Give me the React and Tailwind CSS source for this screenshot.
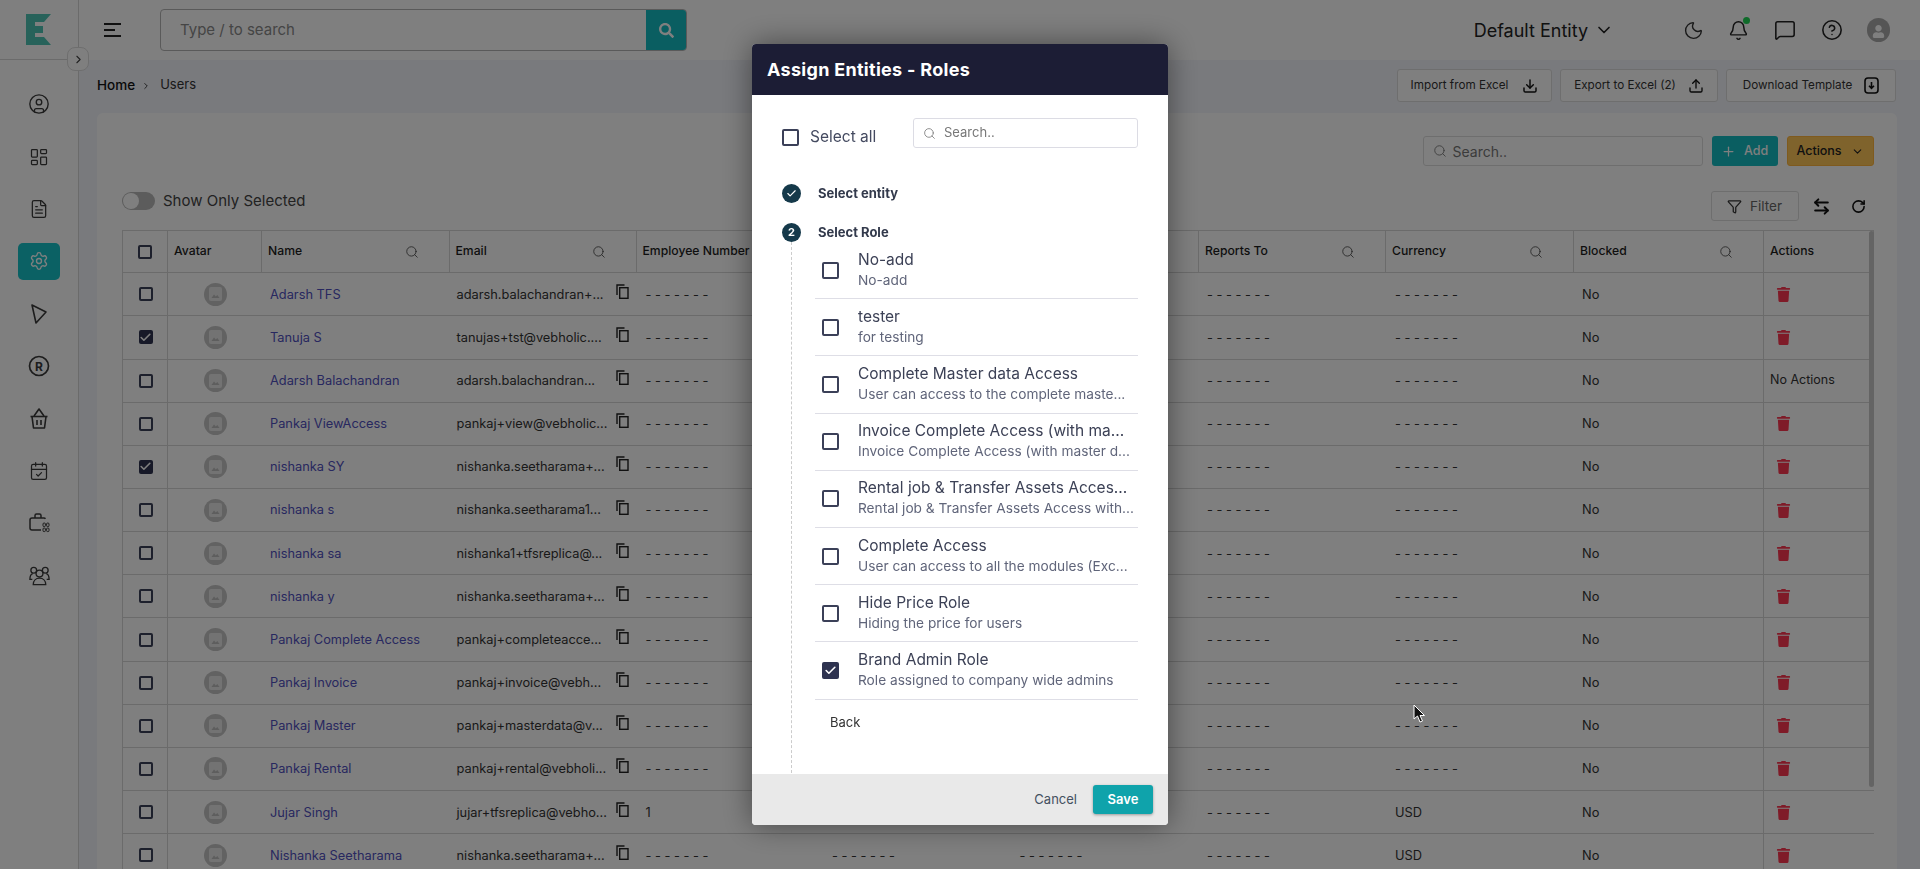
import {
  Bell, CalendarCheck, Check, ChevronDown, ChevronRight, CircleHelp, CircleUser, Download,
  FileText, Filter, LayoutDashboard, MessageSquare, Moon, Plus, RotateCw, Search, Settings,
  Upload, ArrowLeftRight,
} from 'lucide-react';
import { FaSearch, FaTrash, FaUser } from 'react-icons/fa';

const DASH = '- - - - - - -';

const users = [
  { name: 'Adarsh TFS', email: 'adarsh.balachandran+...' },
  { name: 'Tanuja S', email: 'tanujas+tst@vebholic....', checked: true },
  { name: 'Adarsh Balachandran', email: 'adarsh.balachandran...', noActions: true },
  { name: 'Pankaj ViewAccess', email: 'pankaj+view@vebholic...' },
  { name: 'nishanka SY', email: 'nishanka.seetharama+...', checked: true },
  { name: 'nishanka s', email: 'nishanka.seetharama1...' },
  { name: 'nishanka sa', email: 'nishanka1+tfsreplica@...' },
  { name: 'nishanka y', email: 'nishanka.seetharama+...' },
  { name: 'Pankaj Complete Access', email: 'pankaj+completeacce...' },
  { name: 'Pankaj Invoice', email: 'pankaj+invoice@vebh...' },
  { name: 'Pankaj Master', email: 'pankaj+masterdata@v...' },
  { name: 'Pankaj Rental', email: 'pankaj+rental@vebholi...' },
  { name: 'Jujar Singh', email: 'jujar+tfsreplica@vebho...', number: '1', currency: 'USD' },
  { name: 'Nishanka Seetharama', email: 'nishanka.seetharama+...', currency: 'USD' },
];

const roles = [
  { title: 'No-add', desc: 'No-add' },
  { title: 'tester', desc: 'for testing' },
  { title: 'Complete Master data Access', desc: 'User can access to the complete maste...' },
  { title: 'Invoice Complete Access (with ma...', desc: 'Invoice Complete Access (with master d...' },
  { title: 'Rental job & Transfer Assets Acces...', desc: 'Rental job & Transfer Assets Access with...' },
  { title: 'Complete Access', desc: 'User can access to all the modules (Exc...' },
  { title: 'Hide Price Role', desc: 'Hiding the price for users' },
  { title: 'Brand Admin Role', desc: 'Role assigned to company wide admins', checked: true },
];

const COLS = 'grid grid-cols-[45px_94px_187.5px_187px_187.5px_187.5px_187.5px_187px_188px_190px_109.5px]';

const Box = ({ checked, className = '' }) =>
  checked ? (
    <span className={`flex items-center justify-center rounded-[2px] bg-[#2e3350] text-white ${className}`}>
      <Check size={13} strokeWidth={3} />
    </span>
  ) : (
    <span className={`block rounded-[2px] border-2 border-[#3b4058] bg-white ${className}`} />
  );

const TriangleIcon = () => (
  <svg width="20" height="22" viewBox="0 0 20 22" fill="none" stroke="#3a3a3a" strokeWidth="1.6" strokeLinejoin="round">
    <path d="M3 2 L17 9 L7 20 Z" />
  </svg>
);

const RegisteredIcon = () => (
  <svg width="22" height="22" viewBox="0 0 22 22">
    <circle cx="11" cy="11" r="9.5" fill="none" stroke="#3a3a3a" strokeWidth="1.7" />
    <text x="11" y="15.5" textAnchor="middle" fontSize="12" fontWeight="700" fill="#3a3a3a">R</text>
  </svg>
);

const BasketIcon = () => (
  <svg width="22" height="24" viewBox="0 0 22 24" fill="none" stroke="#3a3a3a" strokeWidth="1.6" strokeLinejoin="round">
    <path d="M6 9L11 2L16 9" />
    <path d="M2.5 9.5H19.5" />
    <path d="M4 9.5L5.5 21H16.5L18 9.5" />
    <path d="M9 13V18M13 13V18" />
  </svg>
);

const BriefcaseGrid = () => (
  <svg width="22" height="22" viewBox="0 0 22 22" fill="none" stroke="#3a3a3a" strokeWidth="1.5">
    <path d="M13 18H4a2 2 0 0 1-2-2V8a2 2 0 0 1 2-2h12a2 2 0 0 1 1.5.7" />
    <path d="M7 6V3.5A1.5 1.5 0 0 1 8.5 2h3A1.5 1.5 0 0 1 13 3.5V6" />
    <rect x="15" y="11" width="2.4" height="3.6" rx="1" strokeWidth="1" />
    <rect x="18.6" y="11" width="2.4" height="3.6" rx="1" strokeWidth="1" />
    <rect x="15" y="16" width="2.4" height="3.6" rx="1" strokeWidth="1" />
    <rect x="18.6" y="16" width="2.4" height="3.6" rx="1" strokeWidth="1" />
  </svg>
);

const GroupIcon = () => (
  <svg width="23" height="23" viewBox="0 0 24 24" fill="none" stroke="#3a3a3a" strokeWidth="1.4">
    <circle cx="12" cy="10" r="3.6" />
    <path d="M5.5 21.5c0-4 2.8-6.7 6.5-6.7s6.5 2.7 6.5 6.7z" />
    <circle cx="6" cy="6.5" r="3" />
    <circle cx="18" cy="6.5" r="3" />
    <path d="M4.5 16H2c0-3 1.2-5.5 3-6M19.5 16H22c0-3-1.2-5.5-3-6" />
  </svg>
);

const CopyIcon = () => (
  <svg width="13" height="15" viewBox="0 0 13 15" fill="none" stroke="#222" strokeWidth="1.4" className="mb-[6px] shrink-0">
    <path d="M1 11V1h7.5" />
    <rect x="3.7" y="3.7" width="8.3" height="10.6" />
  </svg>
);

const AvatarIcon = () => (
  <span className="flex h-[23px] w-[23px] items-center justify-center rounded-full bg-[#c4c4c4]">
    <svg width="13" height="14" viewBox="0 0 13 14">
      <rect width="13" height="14" rx="2" fill="#e6e6e6" />
      <path d="M2.5 11 L5 7.5 L6.8 9.5 L8.3 8 L10.5 11Z" fill="#bcbcbc" />
    </svg>
  </span>
);

const TemplateIcon = () => (
  <svg width="15" height="17" viewBox="0 0 15 17" fill="none" stroke="#111" strokeWidth="1.6">
    <rect x="1" y="1" width="13" height="15" rx="3" />
    <path d="M7.5 5v6M5 8.8l2.5 2.5L10 8.8" />
  </svg>
);

const navIcons = [
  <CircleUser key="a" size={22} strokeWidth={1.5} className="text-[#3a3a3a]" />,
  <LayoutDashboard key="b" size={20} strokeWidth={1.5} className="text-[#3a3a3a]" />,
  <FileText key="c" size={20} strokeWidth={1.5} className="text-[#3a3a3a]" />,
  <span key="d" className="flex h-[37px] w-[42px] items-center justify-center rounded-[5px] bg-[#17c2c8] text-white">
    <Settings size={20} strokeWidth={1.6} />
  </span>,
  <TriangleIcon key="e" />,
  <RegisteredIcon key="f" />,
  <BasketIcon key="g" />,
  <CalendarCheck key="h" size={20} strokeWidth={1.5} className="text-[#3a3a3a]" />,
  <BriefcaseGrid key="i" />,
  <GroupIcon key="j" />,
];

const Sidebar = () => (
  <aside className="w-[79px] shrink-0 border-r border-[#d6d6d6] bg-white">
    <div className="flex h-[60px] items-center border-b border-[#d6d6d6] pl-[26px]">
      <svg width="25" height="31" viewBox="0 0 25 31">
        <path d="M0 0H25L18 8H9V12H17V19H9V23H18L25 31H0Z" fill="#4fc4b4" />
      </svg>
    </div>
    <nav className="flex flex-col items-center pt-[18px]">
      {navIcons.map((icon, i) => (
        <div key={i} className="flex h-[52.4px] w-full items-center justify-center">
          {icon}
        </div>
      ))}
    </nav>
  </aside>
);

const TopBar = () => (
  <header className="flex h-[60px] shrink-0 items-center bg-white">
    <svg width="17" height="14" viewBox="0 0 17 14" className="ml-[25px]" stroke="#222" strokeWidth="2">
      <path d="M0 1H17M0 7H11M0 13H17" />
    </svg>
    <div className="ml-[39px] flex h-[42px] w-[527px] overflow-hidden rounded-[4px] border border-[#b5b5b5]">
      <div className="flex flex-1 items-center pl-[19px] text-[15px] text-[#8a8a8a]">Type / to search</div>
      <div className="flex w-[40px] items-center justify-center bg-[#14bcc2] text-white">
        <FaSearch size={15} />
      </div>
    </div>
    <div className="ml-auto flex items-center pr-[30px]">
      <span className="text-[18px] text-[#222]">Default Entity</span>
      <ChevronDown size={20} strokeWidth={2} className="ml-[6px] text-[#222]" />
      <Moon size={21} strokeWidth={1.6} className="ml-[69px] text-[#333]" />
      <span className="relative ml-[24px]">
        <Bell size={21} strokeWidth={1.7} className="text-[#222]" />
        <span className="absolute -top-[3px] right-[-1px] h-[7px] w-[7px] rounded-full bg-[#1fd655]" />
      </span>
      <MessageSquare size={22} strokeWidth={1.7} className="ml-[25px] text-[#222]" />
      <CircleHelp size={22} strokeWidth={1.7} className="ml-[25px] text-[#222]" />
      <span className="ml-[24px] flex h-[24px] w-[23px] items-end justify-center overflow-hidden rounded-full bg-[#aaa] pb-[4px] text-white">
        <FaUser size={13} />
      </span>
    </div>
  </header>
);

const HeadCell = ({ label, search }) => (
  <div className="flex items-center justify-between border-r border-[#d6d6d6] pl-[6px] pr-[30px]">
    <span className="whitespace-nowrap text-[12.2px] font-medium text-[#1d1d1d]">{label}</span>
    {search && <Search size={14} strokeWidth={1.4} className="shrink-0 text-[#444]" />}
  </div>
);

const Table = () => (
  <div className="relative border-l border-t border-[#d6d6d6]">
    <div className={`${COLS} h-[42.2px] border-b border-[#d6d6d6]`}>
      <div className="flex items-center justify-center border-r border-[#d6d6d6] pr-[1px]">
        <Box className="h-[14px] w-[14px]" />
      </div>
      <HeadCell label="Avatar" />
      <HeadCell label="Name" search />
      <HeadCell label="Email" search />
      <HeadCell label="Employee Number" />
      <HeadCell label="" />
      <HeadCell label="" search />
      <HeadCell label="Reports To" search />
      <HeadCell label="Currency" search />
      <HeadCell label="Blocked" search />
      <HeadCell label="Actions" />
    </div>
    {users.map((u, i) => (
      <div key={u.name} className={`${COLS} h-[43.17px] border-b border-[#d6d6d6] text-[12.8px] text-[#333]`}>
        <div className="flex items-center justify-center border-r border-[#d6d6d6] pl-[1px]">
          <Box checked={u.checked} className="h-[14px] w-[14px]" />
        </div>
        <div className="flex items-center justify-center">
          <AvatarIcon />
        </div>
        <div className="flex items-center whitespace-nowrap pl-[8px] text-[#5050c0]">{u.name}</div>
        <div className="flex items-center justify-between whitespace-nowrap pl-[7px] pr-[8px]">
          <span>{u.email}</span>
          <CopyIcon />
        </div>
        <div className="flex items-center pl-[9px]">{u.number || DASH}</div>
        {/* these two columns sit behind the modal except on the last row */}
        <div className="flex items-center pl-[8px]">{i === users.length - 1 ? DASH : ''}</div>
        <div className="flex items-center pl-[8px]">{i === users.length - 1 ? DASH : ''}</div>
        <div className="flex items-center pl-[8px]">{DASH}</div>
        <div className="flex items-center pl-[9px]">{u.currency || DASH}</div>
        <div className="flex items-center border-r border-[#d6d6d6] pl-[8px]">No</div>
        <div className="flex items-center pl-[12px]">
          {u.noActions ? <span className="-ml-[6px] whitespace-nowrap text-[12.5px]">No Actions</span> : <FaTrash size={15} className="text-[#ff3650]" />}
        </div>
      </div>
    ))}
    <div className="absolute right-0 top-0 h-[556px] w-[5px] rounded-full bg-[#c8c8c8]" />
  </div>
);

const Page = () => (
  <div className="flex min-h-0 flex-1 flex-col overflow-hidden bg-[#f2f4fb] pl-[18px] pr-[23px] pt-[9px]">
    <div className="flex h-[33px] shrink-0 items-center">
      <span className="text-[13.5px] font-medium text-[#111]">Home</span>
      <ChevronRight size={10} className="ml-[6px] text-[#222]" />
      <span className="-mt-[2px] ml-[9px] text-[13px] text-[#333]">Users</span>
      <div className="ml-auto flex gap-[8px] pr-[1px]">
        <button className="flex h-[33px] w-[155px] items-center justify-center gap-[14px] rounded-[3px] border border-[#ddd] bg-white text-[11.7px] text-[#333]">
          Import from Excel <Download size={16} strokeWidth={2.2} className="text-[#111]" />
        </button>
        <button className="flex h-[33px] w-[158px] items-center justify-center gap-[12px] rounded-[3px] border border-[#ddd] bg-white text-[11.7px] text-[#333]">
          Export to Excel (2) <Upload size={16} strokeWidth={2} className="text-[#111]" />
        </button>
        <button className="flex h-[33px] w-[170px] items-center justify-center gap-[12px] rounded-[3px] border border-[#ddd] bg-white text-[11.7px] text-[#333]">
          Download Template <TemplateIcon />
        </button>
      </div>
    </div>
    <div className="mt-[11px] flex-1 rounded-t-[6px] bg-white pl-[25px] pr-[23.5px] pt-[23px]">
      <div className="flex h-[30px] justify-end gap-[9px]">
        <div className="flex w-[280px] items-center gap-[6px] rounded-[3px] border border-[#ddd] pl-[9px] text-[14px] text-[#777]">
          <Search size={14} strokeWidth={1.5} /> Search..
        </div>
        <button className="flex w-[66px] items-center justify-center gap-[8px] rounded-[3px] bg-[#14bcc2] text-[12.5px] font-medium text-white">
          <Plus size={15} /> Add
        </button>
        <button className="flex w-[87px] items-center justify-center gap-[9px] rounded-[3px] border border-[#ffb53c] bg-[#ffc658] text-[12.5px] font-medium text-[#222]">
          Actions <ChevronDown size={13} />
        </button>
      </div>
      <div className="mt-[25px] flex h-[30px] items-center">
        <div className="-mt-[10px] flex items-center">
          <span className="relative h-[18px] w-[33px] rounded-full bg-[#b8b8b8]">
            <span className="absolute left-[1px] top-[1px] h-[16px] w-[16px] rounded-full bg-white" />
          </span>
          <span className="ml-[8px] text-[15px] text-[#444]">Show Only Selected</span>
        </div>
        <button className="ml-auto flex h-[30px] w-[88px] items-center justify-center gap-[8px] rounded-[3px] border border-[#ddd] text-[13.5px] text-[#666]">
          <Filter size={15} className="text-[#333]" /> Filter
        </button>
        <ArrowLeftRight size={19} strokeWidth={2.5} className="ml-[13px] text-[#111]" />
        <RotateCw size={15} strokeWidth={2.5} className="ml-[20px] mr-[8px] text-[#111]" />
      </div>
      <div className="mt-[9px]">
        <Table />
      </div>
    </div>
  </div>
);

const Modal = () => (
  <div className="fixed inset-0 flex justify-center bg-black/50">
    <div className="mt-[44px] flex h-[781px] w-[416px] flex-col overflow-hidden rounded-[4px] bg-white shadow-[0_0_30px_rgba(0,0,0,0.45)]">
      <div className="flex h-[51px] shrink-0 items-center bg-[#1c1d35] pl-[15px] text-[18px] font-bold tracking-[0.3px] text-white">
        Assign Entities - Roles
      </div>
      <div className="min-h-0 flex-1 overflow-hidden px-[30px]">
        <div className="flex items-start pt-[23px]">
          <Box className="mt-[11px] h-[17px] w-[17px]" />
          <span className="ml-[11px] mt-[9px] text-[15.5px] leading-[20px] text-[#444a60]">Select all</span>
          <div className="ml-auto flex h-[30px] w-[225px] items-center gap-[8px] rounded-[3px] border border-[#dcdce4] pl-[9px] text-[13px] text-[#777]">
            <Search size={13} strokeWidth={1.5} /> Search..
          </div>
        </div>
        <div className="mt-[36px] flex items-center">
          <span className="flex h-[19px] w-[19px] items-center justify-center rounded-full bg-[#15394a] text-white">
            <Check size={11} strokeWidth={2.5} />
          </span>
          <span className="ml-[17px] text-[13px] font-bold text-[#333a4c]">Select entity</span>
        </div>
        <div className="mt-[19px] flex items-center">
          <span className="flex h-[19px] w-[19px] items-center justify-center rounded-full bg-[#15394a] text-[11px] font-bold text-white">2</span>
          <span className="ml-[17px] text-[13px] font-bold text-[#333a4c]">Select Role</span>
        </div>
        <div className="ml-[9px] flex h-[531px] flex-col border-l border-dashed border-[#ccc] pl-[23px]">
          {roles.map((r) => (
            <div key={r.title} className="flex h-[57.2px] shrink-0 items-center border-b border-[#dedee6] pl-[7px]">
              <Box checked={r.checked} className="h-[17px] w-[17px] shrink-0" />
              <div className="ml-[19px] min-w-0 -mt-[2px]">
                <div className="whitespace-nowrap text-[15.5px] leading-[21px] text-[#3c4156]">{r.title}</div>
                <div className="whitespace-nowrap text-[13.7px] leading-[20px] text-[#60657a]">{r.desc}</div>
              </div>
            </div>
          ))}
          <div className="pl-[15px] pt-[12px] text-[13px] leading-[20px] text-[#333]">Back</div>
        </div>
      </div>
      <div className="flex h-[51px] shrink-0 items-center justify-end gap-[16px] bg-[#e9e9e9] pr-[15px]">
        <span className="text-[13px] text-[#44505f]">Cancel</span>
        <button className="h-[29px] w-[60px] rounded-[3px] bg-[#0fa3ab] text-[13px] font-semibold text-white shadow-[0_1px_3px_rgba(0,0,0,0.35)]">Save</button>
      </div>
    </div>
  </div>
);

export default function App() {
  return (
    <div className="relative flex h-screen overflow-hidden font-['Inter',sans-serif]">
      <Sidebar />
      <main className="flex min-w-0 flex-1 flex-col">
        <TopBar />
        <Page />
      </main>
      <span className="absolute left-[67px] top-[47px] flex h-[24px] w-[22px] items-center justify-center rounded-[8px] border border-[#ddd] bg-white text-[#444]">
        <ChevronRight size={13} />
      </span>
      <Modal />
      <svg className="absolute left-[1413px] top-[704px]" width="13" height="20" viewBox="0 0 13 20">
        <path d="M1 1V15L4.5 12L7 18L9.5 17L7 11.5H11.5Z" fill="#111" stroke="#fff" strokeWidth="1" />
      </svg>
    </div>
  );
}
